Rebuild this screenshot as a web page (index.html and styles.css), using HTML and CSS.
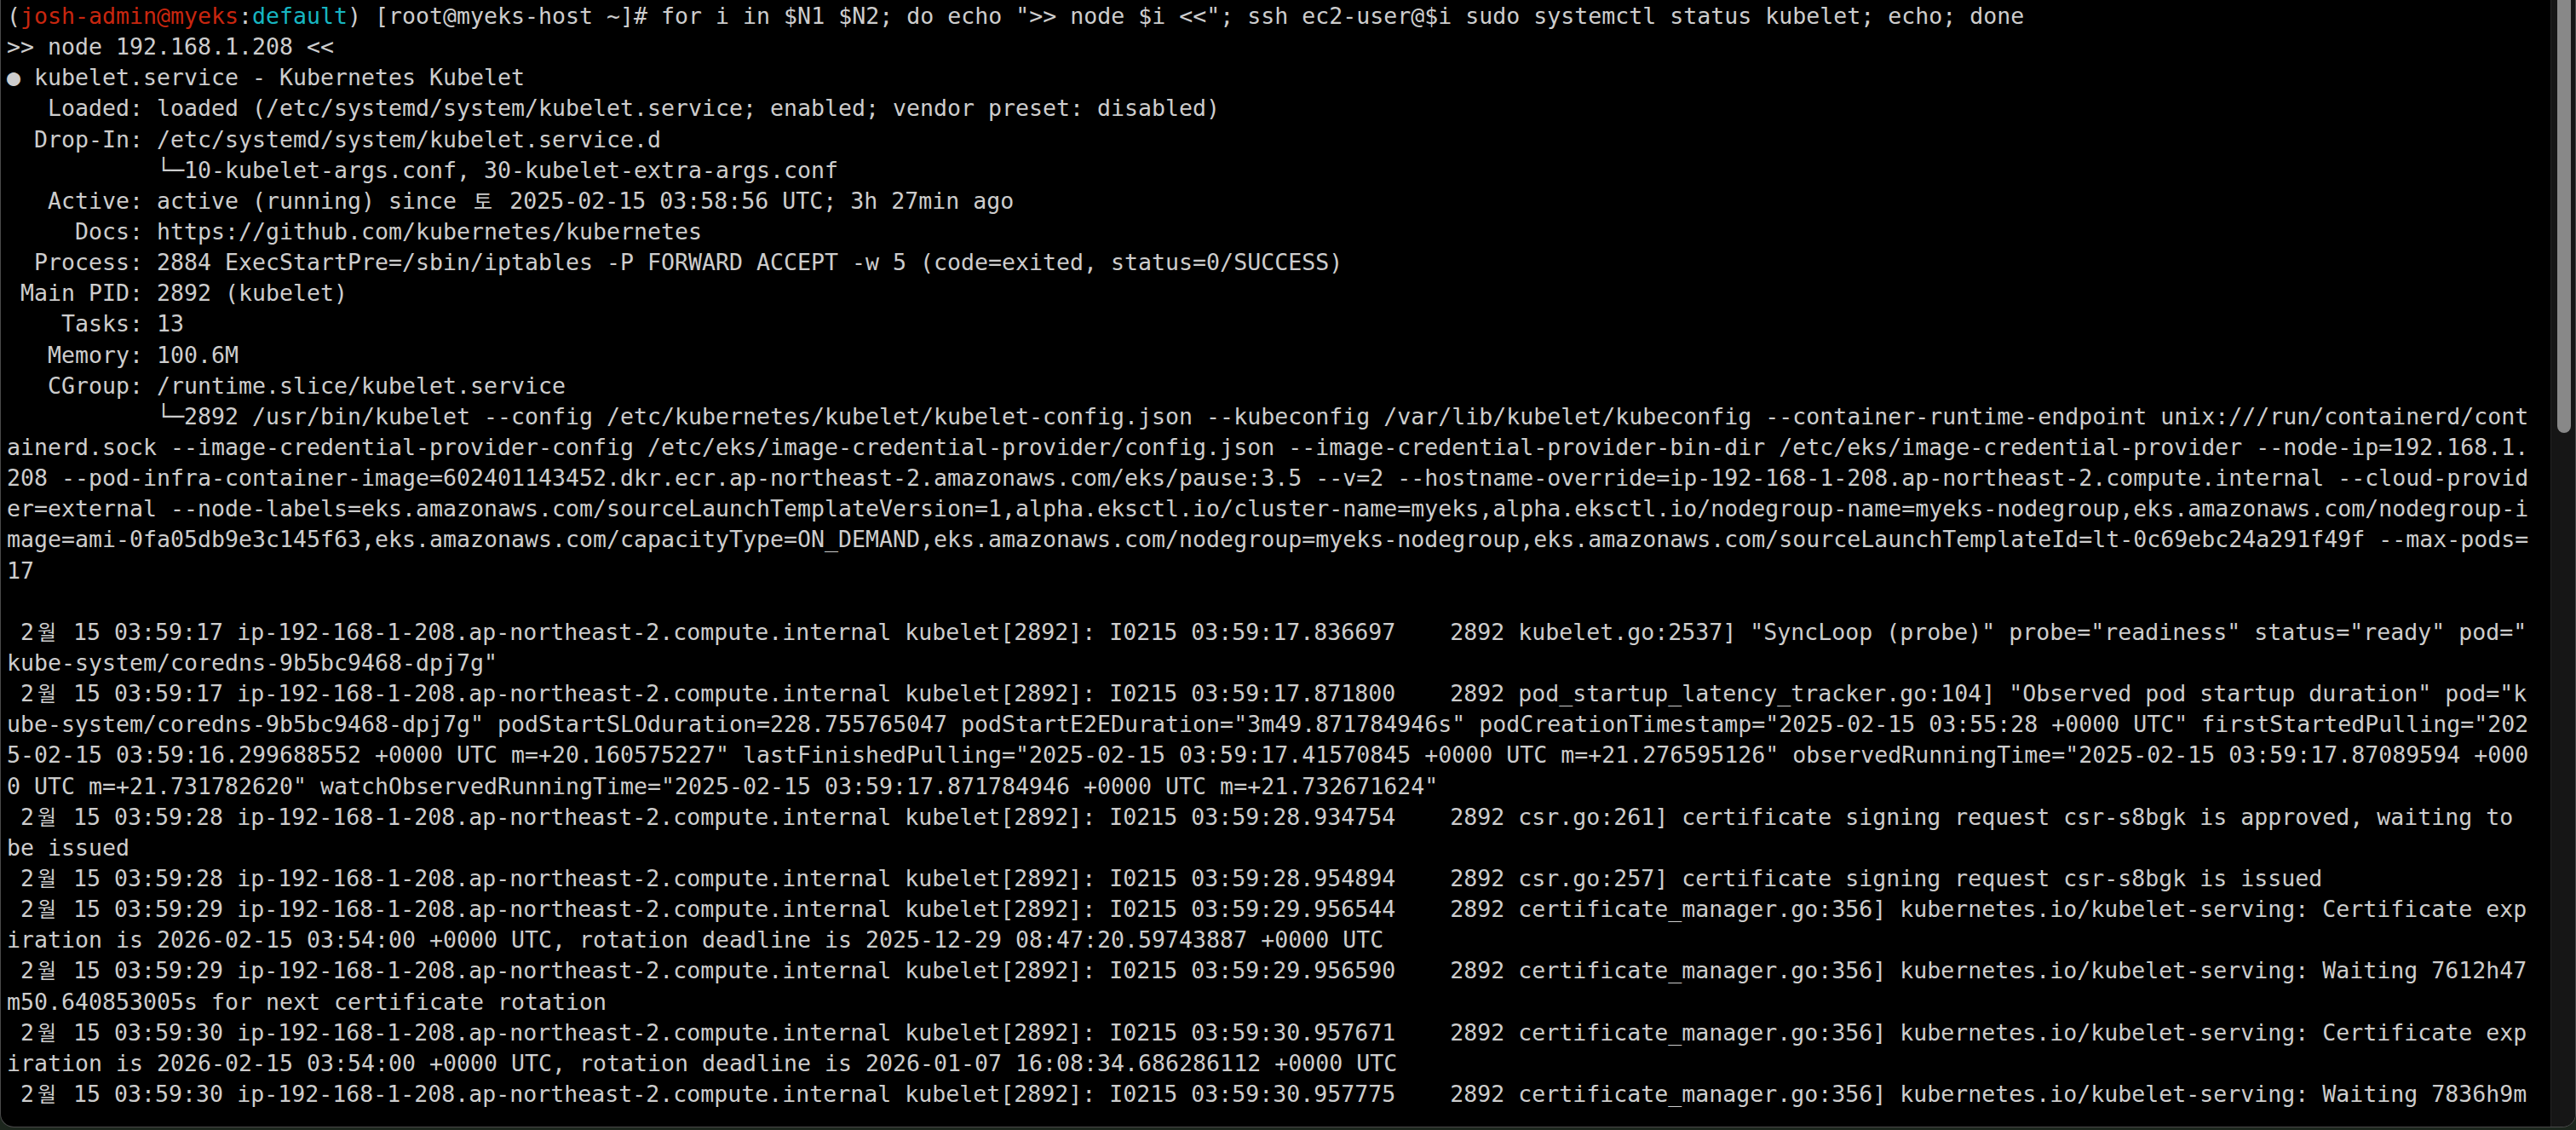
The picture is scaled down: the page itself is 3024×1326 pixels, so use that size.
FILE: index.html
```html
<!DOCTYPE html>
<html lang="ko">
<head>
<meta charset="utf-8">
<title>Terminal</title>
<link rel="stylesheet" href="styles.css">
</head>
<body>
<div class="window">
  <div class="term">
    <div class="screen">
      <div class="ln">(<span class="red">josh-admin@myeks</span>:<span class="cyan">default</span>) [root@myeks-host ~]# for i in $N1 $N2; do echo "&gt;&gt; node $i &lt;&lt;"; ssh ec2-user@$i sudo systemctl status kubelet; echo; done</div>
      <div class="ln">&gt;&gt; node 192.168.1.208 &lt;&lt;</div>
      <div class="ln">● kubelet.service - Kubernetes Kubelet</div>
      <div class="ln">   Loaded: loaded (/etc/systemd/system/kubelet.service; enabled; vendor preset: disabled)</div>
      <div class="ln">  Drop-In: /etc/systemd/system/kubelet.service.d</div>
      <div class="ln">           └─10-kubelet-args.conf, 30-kubelet-extra-args.conf</div>
      <div class="ln">   Active: active (running) since <span class="k">토</span> 2025-02-15 03:58:56 UTC; 3h 27min ago</div>
      <div class="ln">     Docs: https://github.com/kubernetes/kubernetes</div>
      <div class="ln">  Process: 2884 ExecStartPre=/sbin/iptables -P FORWARD ACCEPT -w 5 (code=exited, status=0/SUCCESS)</div>
      <div class="ln"> Main PID: 2892 (kubelet)</div>
      <div class="ln">    Tasks: 13</div>
      <div class="ln">   Memory: 100.6M</div>
      <div class="ln">   CGroup: /runtime.slice/kubelet.service</div>
      <div class="ln">           └─2892 /usr/bin/kubelet --config /etc/kubernetes/kubelet/kubelet-config.json --kubeconfig /var/lib/kubelet/kubeconfig --container-runtime-endpoint unix:///run/containerd/cont</div>
      <div class="ln">ainerd.sock --image-credential-provider-config /etc/eks/image-credential-provider/config.json --image-credential-provider-bin-dir /etc/eks/image-credential-provider --node-ip=192.168.1.</div>
      <div class="ln">208 --pod-infra-container-image=602401143452.dkr.ecr.ap-northeast-2.amazonaws.com/eks/pause:3.5 --v=2 --hostname-override=ip-192-168-1-208.ap-northeast-2.compute.internal --cloud-provid</div>
      <div class="ln">er=external --node-labels=eks.amazonaws.com/sourceLaunchTemplateVersion=1,alpha.eksctl.io/cluster-name=myeks,alpha.eksctl.io/nodegroup-name=myeks-nodegroup,eks.amazonaws.com/nodegroup-i</div>
      <div class="ln">mage=ami-0fa05db9e3c145f63,eks.amazonaws.com/capacityType=ON_DEMAND,eks.amazonaws.com/nodegroup=myeks-nodegroup,eks.amazonaws.com/sourceLaunchTemplateId=lt-0c69ebc24a291f49f --max-pods=</div>
      <div class="ln">17</div>
      <div class="ln"> </div>
      <div class="ln"> 2<span class="k">월</span> 15 03:59:17 ip-192-168-1-208.ap-northeast-2.compute.internal kubelet[2892]: I0215 03:59:17.836697    2892 kubelet.go:2537] "SyncLoop (probe)" probe="readiness" status="ready" pod="</div>
      <div class="ln">kube-system/coredns-9b5bc9468-dpj7g"</div>
      <div class="ln"> 2<span class="k">월</span> 15 03:59:17 ip-192-168-1-208.ap-northeast-2.compute.internal kubelet[2892]: I0215 03:59:17.871800    2892 pod_startup_latency_tracker.go:104] "Observed pod startup duration" pod="k</div>
      <div class="ln">ube-system/coredns-9b5bc9468-dpj7g" podStartSLOduration=228.755765047 podStartE2EDuration="3m49.871784946s" podCreationTimestamp="2025-02-15 03:55:28 +0000 UTC" firstStartedPulling="202</div>
      <div class="ln">5-02-15 03:59:16.299688552 +0000 UTC m=+20.160575227" lastFinishedPulling="2025-02-15 03:59:17.41570845 +0000 UTC m=+21.276595126" observedRunningTime="2025-02-15 03:59:17.87089594 +000</div>
      <div class="ln">0 UTC m=+21.731782620" watchObservedRunningTime="2025-02-15 03:59:17.871784946 +0000 UTC m=+21.732671624"</div>
      <div class="ln"> 2<span class="k">월</span> 15 03:59:28 ip-192-168-1-208.ap-northeast-2.compute.internal kubelet[2892]: I0215 03:59:28.934754    2892 csr.go:261] certificate signing request csr-s8bgk is approved, waiting to</div>
      <div class="ln">be issued</div>
      <div class="ln"> 2<span class="k">월</span> 15 03:59:28 ip-192-168-1-208.ap-northeast-2.compute.internal kubelet[2892]: I0215 03:59:28.954894    2892 csr.go:257] certificate signing request csr-s8bgk is issued</div>
      <div class="ln"> 2<span class="k">월</span> 15 03:59:29 ip-192-168-1-208.ap-northeast-2.compute.internal kubelet[2892]: I0215 03:59:29.956544    2892 certificate_manager.go:356] kubernetes.io/kubelet-serving: Certificate exp</div>
      <div class="ln">iration is 2026-02-15 03:54:00 +0000 UTC, rotation deadline is 2025-12-29 08:47:20.59743887 +0000 UTC</div>
      <div class="ln"> 2<span class="k">월</span> 15 03:59:29 ip-192-168-1-208.ap-northeast-2.compute.internal kubelet[2892]: I0215 03:59:29.956590    2892 certificate_manager.go:356] kubernetes.io/kubelet-serving: Waiting 7612h47</div>
      <div class="ln">m50.640853005s for next certificate rotation</div>
      <div class="ln"> 2<span class="k">월</span> 15 03:59:30 ip-192-168-1-208.ap-northeast-2.compute.internal kubelet[2892]: I0215 03:59:30.957671    2892 certificate_manager.go:356] kubernetes.io/kubelet-serving: Certificate exp</div>
      <div class="ln">iration is 2026-02-15 03:54:00 +0000 UTC, rotation deadline is 2026-01-07 16:08:34.686286112 +0000 UTC</div>
      <div class="ln"> 2<span class="k">월</span> 15 03:59:30 ip-192-168-1-208.ap-northeast-2.compute.internal kubelet[2892]: I0215 03:59:30.957775    2892 certificate_manager.go:356] kubernetes.io/kubelet-serving: Waiting 7836h9m</div>
    </div>
  </div>
  <div class="scrollbar"><div class="thumb"></div></div>
</div>
</body>
</html>
```

FILE: styles.css
```css
html, body {
  margin: 0;
  padding: 0;
}

body {
  width: 3024px;
  height: 1326px;
  overflow: hidden;
  background: #1c261d;
}

.window {
  box-sizing: border-box;
  width: 3024px;
  height: 1323px;
  display: flex;
  background: #000;
  border: 1px solid #4a4a4a;
  border-top: none;
  border-radius: 0 0 16px 16px;
  overflow: hidden;
}

.term {
  flex: 1;
  min-width: 0;
  padding: 1px 0 0 7px;
  overflow: hidden;
}

.screen {
  font-family: "DejaVu Sans Mono", "Noto Sans CJK KR", monospace;
  font-size: 26.58px;
  line-height: 36.15px;
  color: #cdcdcd;
}

.ln {
  white-space: pre;
  height: 36.15px;
}

.red {
  color: #c8260f;
}

.cyan {
  color: #17b6c2;
}

.k {
  font-family: "Noto Sans CJK KR", sans-serif;
  font-size: 24px;
  line-height: 20px;
  padding-left: 4px;
  letter-spacing: 4px;
}

.scrollbar {
  box-sizing: border-box;
  width: 29px;
  border-left: 1px solid #262626;
  background: #161616;
  padding-left: 7px;
}

.thumb {
  width: 16px;
  height: 508px;
  background: #888888;
  border-radius: 0 0 8px 8px;
}
```
